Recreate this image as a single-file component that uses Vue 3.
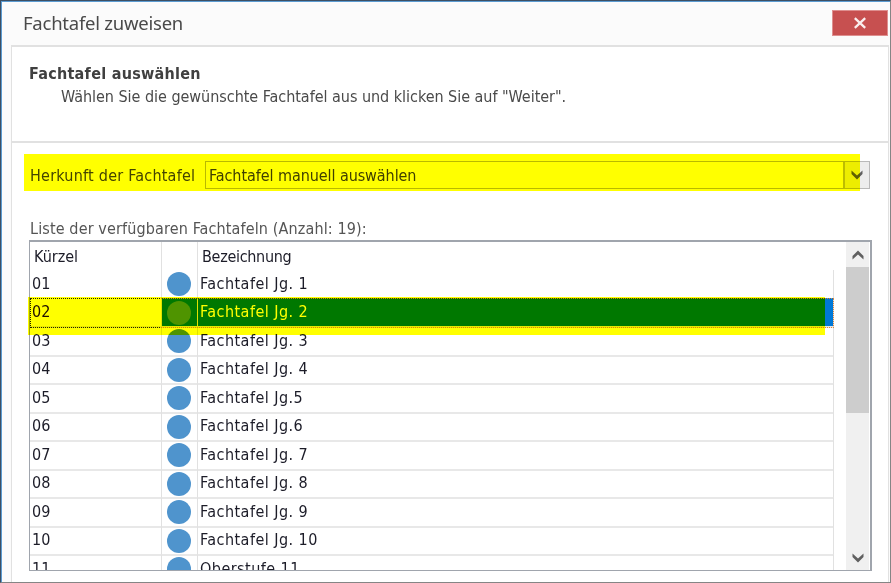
<script setup>
const rows = [
  { id: '01', name: 'Fachtafel Jg. 1' },
  { id: '02', name: 'Fachtafel Jg. 2', selected: true },
  { id: '03', name: 'Fachtafel Jg. 3' },
  { id: '04', name: 'Fachtafel Jg. 4' },
  { id: '05', name: 'Fachtafel Jg.5' },
  { id: '06', name: 'Fachtafel Jg.6' },
  { id: '07', name: 'Fachtafel Jg. 7' },
  { id: '08', name: 'Fachtafel Jg. 8' },
  { id: '09', name: 'Fachtafel Jg. 9' },
  { id: '10', name: 'Fachtafel Jg. 10' },
  { id: '11', name: 'Oberstufe 11' },
]
</script>

<template>
  <div class="window">
    <header class="titlebar">
      <h1>Fachtafel zuweisen</h1>
      <button class="close" aria-label="Schließen">
        <svg width="14" height="12" viewBox="0 0 14 12"><path d="M1.8 1.2 L12.2 10.8 M12.2 1.2 L1.8 10.8" stroke="#faeeee" stroke-width="2.3" fill="none" /></svg>
      </button>
    </header>
    <main class="panel">
      <section class="intro">
        <h2>Fachtafel auswählen</h2>
        <p>Wählen Sie die gewünschte Fachtafel aus und klicken Sie auf "Weiter".</p>
      </section>
      <section class="origin">
        <label><span>Herkunft der Fachtafel</span></label>
        <div class="select">
          <span class="value">Fachtafel manuell auswählen</span>
          <span class="drop">
            <svg width="12" height="10" viewBox="0 0 12 10"><path d="M0.5 0.5 L6 5.5 L11.5 0.5 V4 L6 9.5 L0.5 4 Z" fill="#606060" /></svg>
          </span>
        </div>
        <div class="marker marker-origin"></div>
      </section>
      <p class="caption">Liste der verfügbaren Fachtafeln (Anzahl: 19):</p>
      <section class="list">
        <div class="grid">
          <div class="head">
            <span class="c1">Kürzel</span><span class="c2"></span><span class="c3">Bezeichnung</span>
          </div>
          <div v-for="r in rows" :key="r.id" class="row" :class="{ selected: r.selected }">
            <span class="c1">{{ r.id }}</span>
            <span class="c2"><i class="dot"></i></span>
            <span class="c3">{{ r.name }}</span>
          </div>
        </div>
        <div class="scroll">
          <div class="arrow">
            <svg width="12" height="10" viewBox="0 0 12 10"><path d="M0.5 9.5 L6 4.5 L11.5 9.5 V6 L6 0.5 L0.5 6 Z" fill="#606060" /></svg>
          </div>
          <div class="thumb"></div>
          <div class="arrow down">
            <svg width="12" height="10" viewBox="0 0 12 10"><path d="M0.5 0.5 L6 5.5 L11.5 0.5 V4 L6 9.5 L0.5 4 Z" fill="#606060" /></svg>
          </div>
        </div>
      </section>
      <div class="marker marker-row"></div>
    </main>
  </div>
</template>

<style>
body { margin: 0; overflow: hidden; }
</style>

<style scoped>
* { box-sizing: border-box; }
h1, h2, p { margin: 0; font-weight: 400; }
.window {
  position: relative;
  width: 891px;
  height: 583px;
  background: #fbfbfb;
  border: 1px solid #3d4f63;
  border-right-color: #858585;
  border-bottom-color: #858585;
  box-shadow: inset 1px 1px 0 #5b9bd1;
  padding: 0 1px 0 10px;
  display: flex;
  flex-direction: column;
  font-family: "DejaVu Sans Condensed", "DejaVu Sans", sans-serif;
  font-stretch: condensed;
  font-size: 16px;
  color: #4a4a4a;
  white-space: nowrap;
}
.titlebar { height: 44px; flex: none; display: flex; justify-content: space-between; align-items: flex-start; }
h1 {
  font-family: "Noto Sans", sans-serif;
  font-stretch: normal;
  font-size: 18.5px;
  letter-spacing: -0.24px;
  line-height: 26px;
  padding: 9px 0 0 12px;
}
.close {
  width: 56px;
  height: 26px;
  margin-top: 9px;
  margin-right: 1px;
  padding: 0;
  border: 1px solid #de8f8f;
  background: #c75050;
  display: flex;
  align-items: center;
  justify-content: center;
}
.panel {
  width: 878px;
  flex: 1;
  background: #fff;
  border: 2px solid #e1e1e1;
  border-left-width: 1px;
  border-right-width: 1px;
  border-bottom: 0;
  padding-left: 1px;
}
.intro { height: 96px; margin-left: -1px; border-bottom: 2px solid #e1e1e1; padding: 15px 0 0 17px; }
h2 { font-weight: 700; font-size: 16px; line-height: 24px; letter-spacing: 0.27px; color: #404040; }
.intro p { line-height: 22px; padding-left: 32px; letter-spacing: -0.03px; }
.origin { position: relative; height: 74px; padding: 18px 0 0 17px; display: flex; align-items: flex-start; color: #444; }
label { width: 175px; line-height: 30px; letter-spacing: 0.23px; }
.select { width: 665px; height: 28px; border: 1px solid #b9b9b9; display: flex; color: #404040; }
.value { flex: 1; line-height: 28px; padding-left: 3px; letter-spacing: -0.07px; }
.drop { width: 26px; border-left: 2px solid #bdbdbd; background: #ededed; display: flex; align-items: center; justify-content: center; }
.marker { position: absolute; background: #ff0; mix-blend-mode: multiply; pointer-events: none; }
.marker-origin { left: 11px; top: 11px; width: 836px; height: 37px; }
.marker-row { left: 27px; top: 296px; width: 797px; height: 38px; }
.caption { height: 23px; line-height: 24px; padding-left: 17px; letter-spacing: 0.13px; color: #555; }
.list {
  width: 843px;
  height: 331px;
  margin-left: 16px;
  border: 2px solid #a0a5ad;
  border-left-width: 1px;
  border-bottom-width: 1px;
  display: flex;
  color: #1c1c28;
  overflow: hidden;
}
.grid { width: 804px; flex: none; }
.head, .row { display: grid; grid-template-columns: 132px 36px 636px; }
.head { height: 27.5px; line-height: 30px; }
.row { height: 28.5px; line-height: 28px; }
.c1, .c2 { border-right: 1px solid #e1e1e1; }
.row .c3 { border-right: 1px solid #e1e1e1; letter-spacing: 0.46px; }
.row .c1, .row .c2, .row .c3 { border-bottom: 2px solid #e8e8e8; }
.row:nth-child(2) > span { border-bottom-color: transparent; }
.c1 { padding-left: 2px; }
.c3 { padding-left: 2px; }
.head .c1, .head .c3 { padding-left: 4px; }
.head .c3 { letter-spacing: -0.3px; }
.c2 { display: flex; justify-content: center; align-items: center; padding-right: 2px; }
.dot { width: 24px; height: 24px; margin-bottom: -1px; border-radius: 50%; background: #4f94cd; flex: none; }
.row.selected { color: #fff; position: relative; }
.row.selected .c1 { color: #201000; }
.row.selected .c2, .row.selected .c3 { background: #0078d7; background-clip: padding-box; }
.row.selected::before { content: ""; position: absolute; left: 0; top: 0; width: 131px; height: 27.5px; border: 1px dotted #222; border-right: 0; }
.row.selected::after { content: ""; position: absolute; left: 131px; top: 0; width: 672px; height: 27.5px; border: 1px dotted #e0873a; border-left: 0; }
.scroll { width: 23px; margin-left: 12px; background: #f0f0f0; display: flex; flex-direction: column; }
.arrow { height: 25px; display: flex; align-items: center; justify-content: center; }
.thumb { height: 146px; background: #cdcdcd; }
.down { margin-top: auto; }
</style>
